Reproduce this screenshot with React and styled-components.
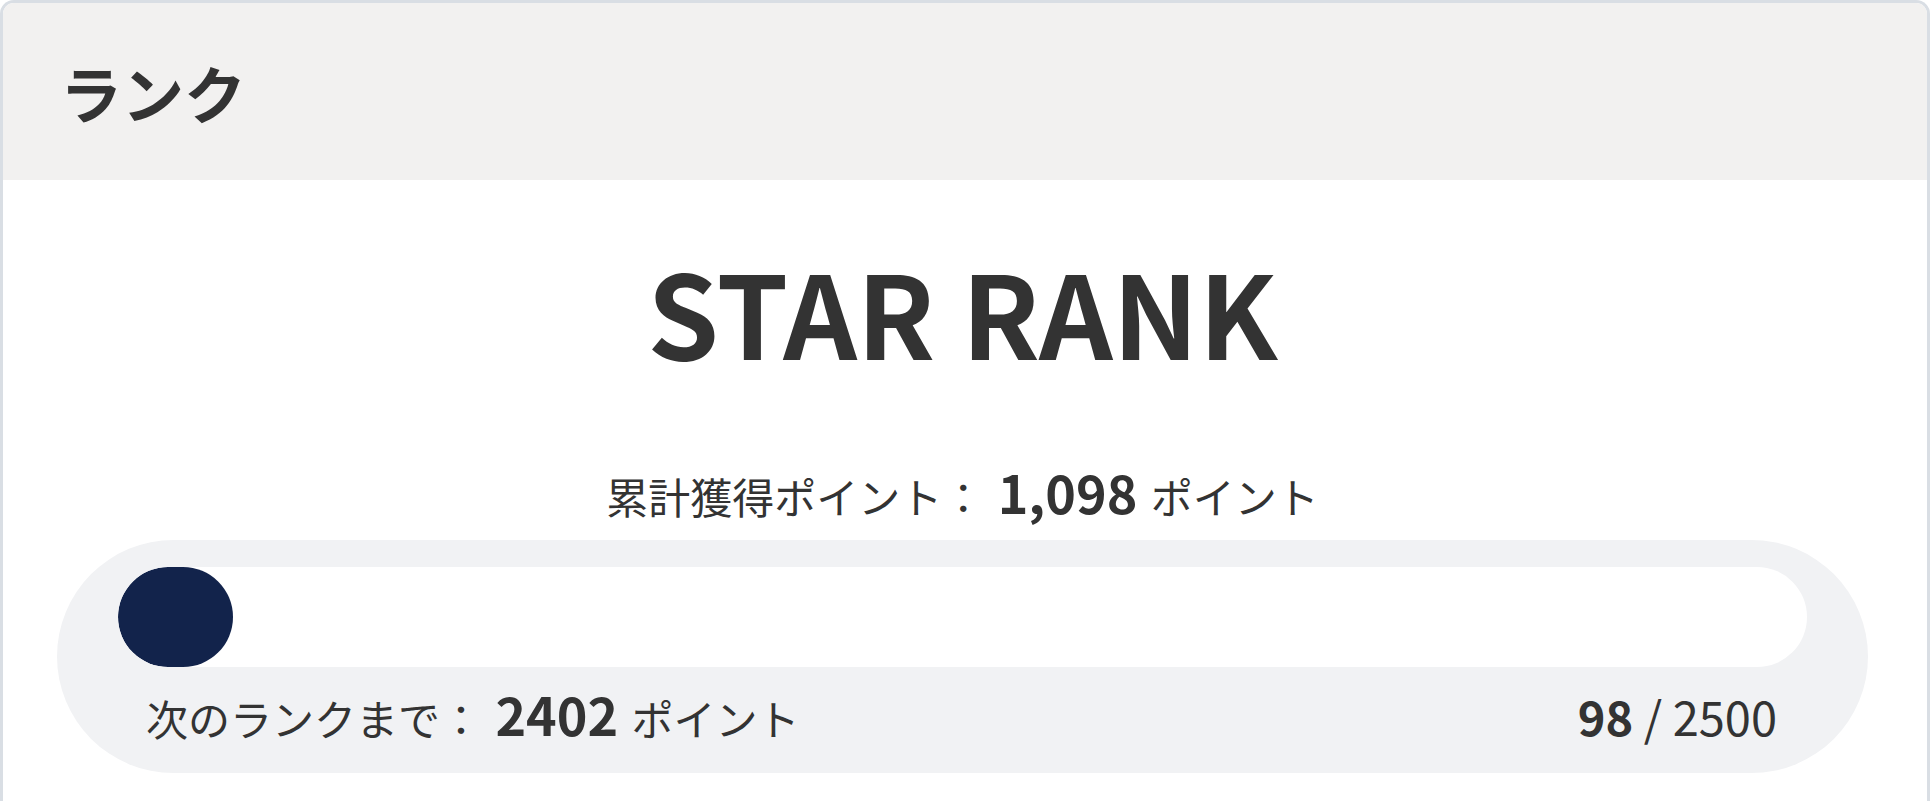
import styled, { createGlobalStyle } from "styled-components";

const GlobalStyle = createGlobalStyle`
    html, body {
        margin: 0;
        padding: 0;
        background: #ffffff;
    }
    body {
        font-family: "Noto Sans CJK JP", "Noto Sans", sans-serif;
        color: #333333;
    }
`;

const Card = styled.section`
    border: 3px solid #d9dee4;
    border-bottom: none;
    border-radius: 14px 14px 0 0;
    overflow: hidden;
    min-height: 798px;
    background: #ffffff;
`;

const Header = styled.header`
    height: 177px;
    display: flex;
    align-items: center;
    padding-left: 57px;
    background: #f2f1f0;
`;

const HeaderTitle = styled.h2`
    margin: 0;
    font-size: 62px;
    font-weight: 700;
    line-height: 1;
    color: #333333;
`;

const Body = styled.div`
    display: flex;
    flex-direction: column;
    align-items: center;
    padding: 0 59px 0 54px;
`;

const RankName = styled.h1`
    margin: 70px 0 0;
    font-size: 115px;
    font-weight: 700;
    line-height: 120px;
    color: #333333;
`;

const PointsLine = styled.p`
    margin: 92px 0 0;
    font-size: 42px;
    line-height: 60px;
    color: #333333;
`;

const Number = styled.strong`
    font-size: ${(p) => p.size || 52}px;
    font-weight: 700;
    margin: 0 4px;
`;

const ProgressBox = styled.div`
    align-self: stretch;
    margin-top: 14px;
    padding: 27px 61px 0;
    height: 233px;
    box-sizing: border-box;
    border-radius: 117px;
    background: #f1f2f4;
`;

const Track = styled.div`
    height: 100px;
    border-radius: 50px;
    background: #ffffff;
    overflow: hidden;
`;

const Fill = styled.div`
    height: 100%;
    min-width: 115px;
    border-radius: 50px;
    background: #12234b;
`;

const ProgressFooter = styled.div`
    display: flex;
    justify-content: space-between;
    align-items: baseline;
    padding: 0 30px 0 28px;
    margin-top: 17px;
    font-size: 42px;
    line-height: 60px;
`;

const Ratio = styled.span`
    font-size: 47px;

    strong {
        margin: 0;
    }
`;

const current = 98;
const goal = 2500;

const App = () => {
    const pct = (current / goal) * 100;
    return (
        <>
            <GlobalStyle />
            <Card>
                <Header>
                    <HeaderTitle>ランク</HeaderTitle>
                </Header>
                <Body>
                    <RankName>STAR RANK</RankName>
                    <PointsLine>
                        累計獲得ポイント： <Number>1,098</Number> ポイント
                    </PointsLine>
                    <ProgressBox>
                        <Track>
                            <Fill style={{ width: `${pct}%` }} />
                        </Track>
                        <ProgressFooter>
                            <span>
                                次のランクまで： <Number>2402</Number> ポイント
                            </span>
                            <Ratio>
                                <Number size={47}>{current}</Number> / {goal}
                            </Ratio>
                        </ProgressFooter>
                    </ProgressBox>
                </Body>
            </Card>
        </>
    );
};

export default App;
